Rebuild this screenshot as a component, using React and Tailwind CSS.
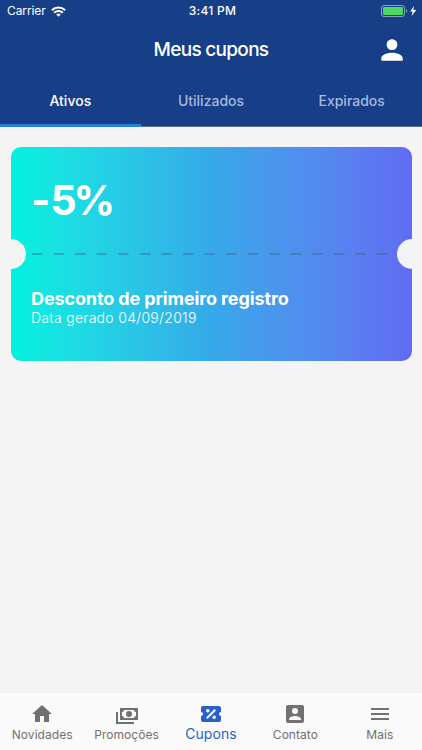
import { MdPerson } from "react-icons/md";

const tabs = [
  { id: "ativos", title: "Ativos" },
  { id: "utilizados", title: "Utilizados" },
  { id: "expirados", title: "Expirados" },
];

const navItems = [
  {
    id: "novidades",
    title: "Novidades",
    path: "M10,20V14H14V20H19V12H22L12,3L2,12H5V20H10Z",
  },
  {
    id: "promocoes",
    title: "Promoções",
    path: "M5,6H23V18H5V6M14,9A3,3 0 0,1 17,12A3,3 0 0,1 14,15A3,3 0 0,1 11,12A3,3 0 0,1 14,9M9,8A2,2 0 0,1 7,10V14A2,2 0 0,1 9,16H19A2,2 0 0,1 21,14V10A2,2 0 0,1 19,8H9M1,10H3V20H19V22H1V10Z",
  },
  {
    id: "cupons",
    title: "Cupons",
    path: "M4,4A2,2 0 0,0 2,6V10A2,2 0 0,1 4,12A2,2 0 0,1 2,14V18A2,2 0 0,0 4,20H20A2,2 0 0,0 22,18V14A2,2 0 0,1 20,12A2,2 0 0,1 22,10V6C22,4.89 21.1,4 20,4H4M15.5,7L17,8.5L8.5,17L7,15.5L15.5,7M8.81,7.04C9.79,7.04 10.58,7.83 10.58,8.81A1.77,1.77 0 0,1 8.81,10.58C7.83,10.58 7.04,9.79 7.04,8.81A1.77,1.77 0 0,1 8.81,7.04M15.19,13.42C16.17,13.42 16.96,14.21 16.96,15.19A1.77,1.77 0 0,1 15.19,16.96C14.21,16.96 13.42,16.17 13.42,15.19A1.77,1.77 0 0,1 15.19,13.42Z",
  },
  {
    id: "contato",
    title: "Contato",
    path: "M6,17C6,15 10,13.9 12,13.9C14,13.9 18,15 18,17V18H6M15,9A3,3 0 0,1 12,12A3,3 0 0,1 9,9A3,3 0 0,1 12,6A3,3 0 0,1 15,9M3,5V19A2,2 0 0,0 5,21H19A2,2 0 0,0 21,19V5A2,2 0 0,0 19,3H5C3.89,3 3,3.9 3,5Z",
  },
  {
    id: "mais",
    title: "Mais",
    path: "M3,6H21V8H3V6M3,11H21V13H3V11M3,16H21V18H3V16Z",
  },
];

const StatusBar = () => (
  <div className="grid h-[22px] grid-cols-3 items-center pl-[7px] pr-[5px] text-[12px] leading-none">
    <div className="flex items-center gap-[5px]">
      <span className="tracking-[-0.1px]">Carrier</span>
      <svg viewBox="0 0 15 11" className="h-[11px] w-[15px]" fill="none" stroke="currentColor" strokeWidth="2.1">
        <path d="M0.9 4.2a9.4 9.4 0 0 1 13.2 0" />
        <path d="M3.2 6.7a6.1 6.1 0 0 1 8.6 0" />
        <path d="M7.5 10.8 5.2 8.5a3.3 3.3 0 0 1 4.6 0z" fill="currentColor" stroke="none" />
      </svg>
    </div>
    <span className="pl-[1px] text-center font-medium tracking-[0.3px]">3:41 PM</span>
    <div className="flex items-center justify-end">
      <svg viewBox="0 0 36 12" className="h-[12px] w-[36px]">
        <rect x="0.5" y="0.5" width="23" height="11" rx="2.5" fill="none" stroke="#8ba0c4" />
        <rect x="2" y="2" width="20" height="8" rx="1" fill="#4cd964" />
        <path d="M25 4v4c1.600-.6 1.600-3.400 0-4z" fill="#8ba0c4" />
        <path d="M33 1 29.200 6.500h2.500L30.600 11l4.700-6h-2.900z" fill="#fff" />
      </svg>
    </div>
  </div>
);

const Header = () => (
  <header className="bg-[#173f87] text-white">
    <StatusBar />

    <div className="grid h-[55px] grid-cols-[46px_1fr_46px] items-center pt-[1px]">
      <h1 className="col-start-2 text-center text-[19px] font-medium tracking-[-0.7px]">Meus cupons</h1>
      <MdPerson className="size-[32px]" />
    </div>

    <nav className="grid h-[50px] grid-cols-3">
      {tabs.map((tab, index) => (
        <button
          key={tab.id}
          className={`flex items-center justify-center text-[14px] font-medium ${
            index === 0
              ? "border-b-[3px] border-[#2582d8] text-white"
              : "border-b border-[#62749c] pb-[2px] text-[#a5b9e0]"
          }`}
        >
          {tab.title}
        </button>
      ))}
    </nav>
  </header>
);

const Coupon = () => (
  <article className="relative h-[214px] overflow-hidden rounded-[10px] bg-linear-to-r from-[#00f2df] via-[#35a9e9] to-[#616bf3] px-[20.5px] text-white">
    <p className="pt-[28px] text-[41px] leading-[50px] font-bold tracking-[-3px]">
      <span className="tracking-[0.2px]">-</span>5%
    </p>

    {/* Tear line */}
    <svg className="mt-[28px] h-[2px] w-[358px]">
      <line x1="1" y1="1" x2="358" y2="1" stroke="#3c5f80" strokeOpacity="0.4" strokeWidth="2" strokeDasharray="10.500 11.060" />
    </svg>

    <h2 className="mt-[32px] text-[18px] leading-[23px] font-bold tracking-[-0.12px]">Desconto de primeiro registro</h2>
    <p className="text-[14px] leading-[16px] font-light tracking-[0.3px]">Data gerado 04/09/2019</p>

    {/* Side notches */}
    <span className="absolute top-[92px] -left-[15px] size-[30px] rounded-full bg-[#f4f4f4]" />
    <span className="absolute top-[92px] -right-[15px] size-[30px] rounded-full bg-[#f4f4f4]" />
  </article>
);

const BottomNav = () => (
  <nav className="grid h-[58px] grid-cols-5 border-t border-[#ededed] bg-[#fafafa]">
    {navItems.map((item) => (
      <a
        key={item.id}
        className={`flex flex-col items-center pt-[9px] ${item.id === "cupons" ? "text-[#2763c5]" : "text-[#717171]"}`}
      >
        <svg viewBox="0 0 24 24" className="size-[24px] shrink-0" fill="currentColor" fillRule="evenodd">
          <path d={item.path} />
        </svg>
        <span
          className={
            item.id === "cupons"
              ? "text-[14px] leading-[15px] tracking-[0.1px]"
              : "text-[12px] leading-[17px] tracking-[0.05px]"
          }
        >
          {item.title}
        </span>
      </a>
    ))}
  </nav>
);

const App = () => (
  <div className="flex h-screen w-full flex-col bg-[#f4f4f4] font-[Inter,sans-serif]">
    <Header />
    <main className="flex-1 px-[10.5px] pt-[20px]">
      <Coupon />
    </main>
    <BottomNav />
  </div>
);

export default App;
